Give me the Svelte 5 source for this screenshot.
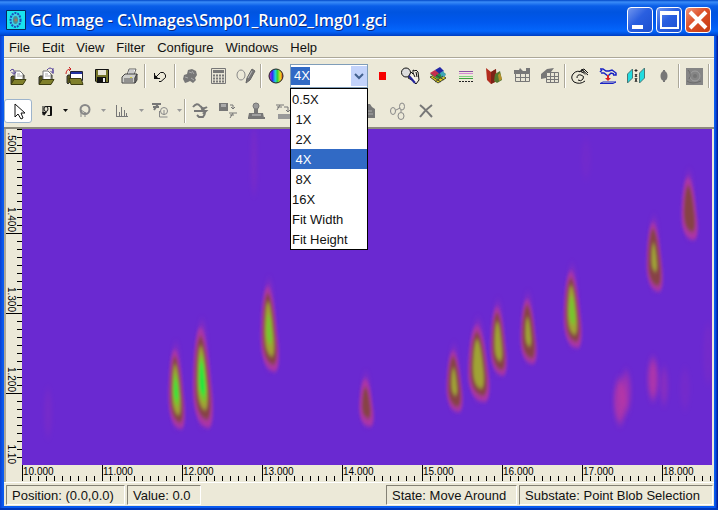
<script>
  const menus = ['File', 'Edit', 'View', 'Filter', 'Configure', 'Windows', 'Help'];

  const folder = `<path d="M3 18V11l1-1h3v5l-3 3zM16 13V9h-2" fill="#55551c" stroke="#333"/><path d="M7 5h5l3 3v6H7z" fill="#fff" stroke="#777"/><path d="M9 8h3M9 10h5" stroke="#aaa"/><path d="M6 13.500h12L15 18.500H3z" fill="#80802b" stroke="#3c3c10"/>`;
  const shape = {
    open: folder + `<path d="M2 5q2-3 4-1v4M3.500 6L6 8.500 8 6" fill="none" stroke="#55429b"/>`,
    reopen: folder + `<path d="M11 4q3-4 6 0v3M14.500 5L17 7.500V2" fill="none" stroke="#55429b"/>`,
    openImage: `<path d="M3 17V10l1-1h3v6l-3 3z" fill="#55551c" stroke="#333"/><path d="M6.500 5.500h12v9h-12z" fill="#fff" stroke="#223"/><path d="M7 6h11v2H7z" fill="#2333a0"/><path d="M5 12.500h12L19 18.500H7z" fill="#80802b" stroke="#3c3c10"/><path d="M2 8q0-5 5-5M5 1l2 2-2 2" fill="none" stroke="#c22"/>`,
    save: `<path d="M3.500 3.500h13v13H5l-1.500-1.500z" fill="#76762a" stroke="#111"/><path d="M6 4h8v5H6z" fill="#e8e5d6"/><path d="M5 11h9v5H5z" fill="#111"/><path d="M11 12h2v4h-2z" fill="#eee"/>`,
    print: `<path d="M7 9l2-6h7l-2 6z" fill="#fff" stroke="#666"/><path d="M9 5h5M9 7h5" stroke="#999"/><path d="M2 11l3-3h12l-2 4v5H2z" fill="#d0d0cc" stroke="#444"/><path d="M15 12l2-4v6l-2 3z" fill="#777" stroke="#444"/><path d="M4 13h9M4 15h9" stroke="#555"/><path d="M10 11h2v1h-2z" fill="#cc4"/>`,
    undo: `<path d="M9 15.500h2l4.500-4V9l-2-2.500h-3L5 12M4.500 7v5.500H10" fill="none" stroke="#111"/><path d="M4 8l5 5H4z" fill="#111"/>`,
    blobs: `<path d="M3 13l1-4 3-1 1-4 4-1 4 2 1 4-2 3 1 2-3 3-3-2-2 1-3 1z" fill="#777"/><path d="M9 6l3 1M12 5l2 3M5 11l3 1M11 12l3 2" stroke="#aaa"/>`,
    calc: `<path d="M3.500 2.500h14v15h-14z" fill="#e8e5d6" stroke="#777"/><path d="M5 4h11v3H5z" fill="#777"/><path d="M5 9.500h11M5 12.500h11M5 15.500h11" stroke="#777" stroke-width="2" stroke-dasharray="2 1"/>`,
    edit: `<ellipse cx="5" cy="9" rx="4" ry="5" fill="none" stroke="#888"/><path d="M10 17l1-5 5-9 3 2-5 9z" fill="#777" stroke="#666"/><path d="M12 12l4-7" stroke="#bbb"/>`,
    stop: `<path d="M7 6h7v8H7z" fill="#f60000"/>`,
    pick: `<circle cx="6" cy="6.500" r="4.500" fill="#dcdcdc" stroke="#111"/><path d="M9 10l2-4 2 2V4l2 1 1-1 2 2 1 8-3 4-4-4-4-2z" fill="#f3eee0" stroke="#111"/><path d="M13 7l2 4M16 6l1 5" stroke="#111"/><path d="M9 10l6 7" stroke="#229" stroke-width="2"/><path d="M12 10l4 5" stroke="#fff"/>`,
    surface: `<path d="M2 11l8 6 8-5-7-5z" fill="#dcd020" stroke="#443"/><path d="M2 8l8 5 8-5-8-5z" fill="#218c47"/><path d="M2 7l5-3 4 3-4 4z" fill="#c52f50"/><path d="M7 4l5-3 4 4-4 3z" fill="#2427a5"/><path d="M12 7l3-2 3 4-4 3z" fill="#3fa6ba"/><path d="M5 11l8 5M8 9l8 5M15 10l-8 6" stroke="#443"/>`,
    lines: `<path d="M3 5h14v1H3z" fill="#8d52a5"/><path d="M3 7h14v1H3z" fill="#d58ad5"/><path d="M3 10h14v1H3z" fill="#7fd07f"/><path d="M3 12h14v1H3z" fill="#3da53d"/><path d="M3 15.500h14" stroke="#222" stroke-dasharray="2 1"/>`,
    solid: `<path d="M2 2l5 4 5-3 1 12-6 3-4-4z" fill="#b32d1e"/><path d="M7 6l5-3-1 13-4 2z" fill="#7c2218"/><path d="M11 8l5-3 2 9-5 3-3-2z" fill="#54772f"/><path d="M14 9l2-2 2 6-3 2z" fill="#b6902b"/>`,
    gridA: `<path d="M2 4h5l1-2 3 3h3V2h4v6H2z" fill="#777"/><path d="M3.500 7.500h14v8h-14zM3 11.500h15M8.500 7v9M13.500 7v9" fill="#e8e5d6" stroke="#777"/>`,
    gridB: `<path d="M1 8l6-5 7-1-3 4h-3v9l-2-3-5 1z" fill="#777"/><path d="M6.500 6.500h12v10h-12zM6 10.500h12M6 13.500h12M10.500 6v10M14.500 6v10" fill="#e8e5d6" stroke="#777"/>`,
    hand: `<path d="M14 7Q7 3 3 8q-3 4 1 8 6 3 11-1M7 12q0-4 4-3 4 1 2 4-2 3-5 1M9 6l3-2 6 5M11 4l3-1 4 4" fill="none" stroke="#111"/><path d="M11 5l5 4M13 4l3 3" stroke="#111" stroke-dasharray="1 1"/>`,
    baseline: `<path d="M2 3h3l3 2h3l3-1 4 3v2h-3M2 6l2-2M3 7h3l4 3 3-3 3 1" fill="none" stroke="#1822c4" stroke-width="1.500"/><path d="M10 9v4" stroke="#d22" stroke-width="2"/><path d="M7 12h6l-3 3z" fill="#d22"/><path d="M2 17.500l3-1.500h13l-3 1.500z" fill="none" stroke="#1822c4"/>`,
    compare: `<path d="M1.500 8l5-5v9l-5 5zM13.500 7l5-5v10l-5 5z" fill="#22dce0" stroke="#4a7775"/><path d="M10 3v3M8.500 4.500h3M9 8l2 3M11 8l-2 3M9 16l2-4M9 12l2 4" stroke="#222"/>`,
    blob: `<ellipse cx="10" cy="10" rx="3.500" ry="5" fill="#777"/><path d="M10 4v12" stroke="#777" stroke-width="2"/>`,
    texture: `<path d="M2 2h17v17H2z" fill="#858585"/><circle cx="11" cy="10" r="5" fill="none" stroke="#a0a0a0"/><circle cx="11" cy="10" r="2" fill="#747474"/><path d="M3 15q5 4 14 0M4 4q4 4 1 9" fill="none" stroke="#6b6b6b"/>`,
    pointer: `<path d="M7 3v13l3-3 3 5 2-1-2-5h4z" fill="#fff" stroke="#111"/>`,
    lasso: `<path d="M8.500 5.500h7v9h-4" fill="none" stroke="#111"/><path d="M14.500 6v8" stroke="#111"/><ellipse cx="10" cy="8" rx="2" ry="2.500" fill="#e8e5d6" stroke="#111"/><path d="M7 5v9" stroke="#111"/><path d="M6 11h5l-3 4z" fill="#111"/>`,
    lassoOff: `<circle cx="11" cy="8.500" r="4.500" fill="none" stroke="#888" stroke-width="2"/><path d="M7 16V9l6 4M11 11v5" fill="none" stroke="#888"/>`,
    chart: `<path d="M4.500 4v12M4 15.500h12M7.500 11v4M9.500 6v9M12.500 9v6M14.500 12v3" fill="none" stroke="#777"/>`,
    template: `<path d="M2 3h9M8 3L4 9M3 6h6" fill="none" stroke="#777" stroke-width="2"/><circle cx="14" cy="10" r="3.500" fill="none" stroke="#888"/><path d="M9.500 10v6h8M14 9v5" fill="none" stroke="#888"/>`,
    drift: `<path d="M3 6q4-5 7-1t7 1M11 5l2 6M4 10h12l-3 3M13 8q4 3 0 8H9l-2-2" fill="none" stroke="#777" stroke-width="2"/>`,
    saveTemplate: `<path d="M1 2h9v8H1z" fill="#777"/><path d="M3 3h5v3H3z" fill="#aaa"/><path d="M12 4h3v4M13 6l2 2 2-2M11 12h8M15 12l-3 5M12 14h4" fill="none" stroke="#777"/>`,
    stamp: `<path d="M3 12h14l1 5H2z" fill="#777"/><circle cx="10" cy="5" r="3" fill="#999" stroke="#777"/><path d="M8 8h4v5H8z" fill="#777"/><path d="M6 14h9" stroke="#ccc"/><path d="M2 17h17" stroke="#777" stroke-width="2"/>`,
    applyTemplate: `<path d="M2 4h8M6 4L3 9M3 6h5M10 6h4v5M12 9l2 2 2-2" fill="none" stroke="#777"/><path d="M4 13h14v5H4z" fill="#999"/>`,
    clip: `<path d="M2 3h8l2 3 3 2v9H4V7H2z" fill="#777"/><path d="M6 10h6M6 13h7" stroke="#aaa"/>`,
    graph: `<ellipse cx="5" cy="10" rx="2.500" ry="3.500" fill="none" stroke="#888"/><ellipse cx="14" cy="5.500" rx="2.500" ry="3.500" fill="none" stroke="#888"/><ellipse cx="13" cy="15" rx="3" ry="3.500" fill="none" stroke="#888"/><path d="M8 9l4-2M13 9v2" stroke="#888"/>`,
    remove: `<path d="M4 4q5 4 12 12M16 4Q9 9 4 16" fill="none" stroke="#777" stroke-width="2"/>`
  };

  const groupsA = [
    [['open', 'Open image'], ['reopen', 'Reopen'], ['openImage', 'Import'], ['save', 'Save'], ['print', 'Print']],
    [['undo', 'Undo']],
    [['blobs', 'Detect blobs'], ['calc', 'Compute'], ['edit', 'Edit blobs']]
  ];
  const views = [['stop', 'Stop'], ['pick', 'Inspect'], ['surface', '3D surface'], ['lines', 'Slices'], ['solid', 'Solid view'], ['gridA', 'Blob table'], ['gridB', 'Peak table']];
  const process = [['hand', 'Draw'], ['baseline', 'Correct baseline'], ['compare', 'Compare'], ['blob', 'Blob overlay']];
  const splits = [['lasso', 'Select blob'], ['lassoOff', 'Select area'], ['chart', 'Chromatogram'], ['template', 'Template']];
  const templates = [['drift', 'Transform'], ['saveTemplate', 'Save template'], ['stamp', 'Stamp'], ['applyTemplate', 'Apply template']];
  const trailing = [['clip', 'Paste'], ['graph', 'Link'], ['remove', 'Delete']];

  const zooms = ['0.5X', ' 1X', ' 2X', ' 4X', ' 8X', '16X', 'Fit Width', 'Fit Height'];
  let zoom = $state(' 4X');

  // Only majors whose label fits in the visible plot are drawn
  let plotWidth = $state(708);
  const range = (n) => Array.from({ length: n }, (_, i) => i);
  const xMajors = $derived(range(Math.max(0, Math.floor((plotWidth - 50) / 80) + 1)).map((i) => ({ at: i * 80, text: `${10 + i}.000` })));
  const yMajors = [
    { at: 24, text: '.500', end: 23 },
    { at: 104, text: '1.400', end: 103 },
    { at: 184, text: '1.300', end: 183 },
    { at: 264, text: '1.200', end: 263 },
    { at: 344, text: '1.10', end: 335 }
  ];

  // Peaks: centre x, top, bottom, half width, strength 0..4
  const peaks = [
    [154, 214, 304, 9, 3.6], [180, 190, 304, 11, 4], [247, 150, 247, 10, 3.3], [344, 246, 300, 8, 1.4],
    [432, 217, 286, 9, 2.2], [456, 190, 277, 12, 3], [476, 172, 250, 9, 2.6], [506, 165, 238, 9, 2.2],
    [550, 136, 223, 10, 3.4], [632, 88, 166, 9, 2.1], [667, 43, 114, 9, 1.6]
  ];
  const smudges = [
    [598, 272, 6, 22, 0.7], [604, 263, 5, 20, 0.5], [631, 250, 5, 20, 0.7], [642, 257, 4, 18, 0.3],
    [232, 32, 3, 34, 0.14], [26, 284, 4, 24, 0.12], [564, 30, 5, 20, 0.07], [686, 225, 5, 30, 0.1], [663, 260, 5, 20, 0.1]
  ];
  const tear = 'M0-1C.5-.95 .8-.3 .95 .25C1.100 .7 .9 1 .5 1C-.2 1-1 .8-.95 .25C-.85-.3-.5-.95 0-1Z';
  const tones = [
    { fill: '#ad35a6', size: 0.88, wide: 0.9, min: 0 },
    { fill: '#874345', size: 0.74, wide: 0.7, min: 1 },
    { fill: '#a0a334', size: 0.56, wide: 0.44, min: 2 },
    { fill: '#73c82d', size: 0.42, wide: 0.34, min: 3 },
    { fill: '#1be83c', size: 0.36, wide: 0.3, min: 3.5 }
  ];
  function layers([x, top, bottom, w, strength]) {
    const mid = (top + bottom) / 2;
    const half = (bottom - top) / 2;
    return tones.filter((t) => strength > t.min).map((t) => {
      const grow = Math.min(1, 0.6 + (strength - t.min) * 0.5);
      return { fill: t.fill, move: `translate(${x} ${mid + half * 0.03}) skewX(2) scale(${w * t.wide * grow} ${half * t.size * grow})` };
    });
  }
</script>

{#snippet tool(item)}
  <button class="tool" aria-label={item[1]}>
    <svg width="20" height="20" viewBox="0 0 20 20">{@html shape[item[0]]}</svg>
  </button>
{/snippet}

<div class="window">
  <header class="title">
    <svg class="app" width="20" height="20" viewBox="0 0 20 20">
      <path d="M.5 .5h19v19H.5z" fill="#19e4ef" stroke="#052a5c" />
      <ellipse cx="9.500" cy="10" rx="5" ry="7" fill="#3ad4e8" stroke="#1c50b8" stroke-width="2" stroke-dasharray="2 1" />
      <ellipse cx="9.500" cy="10" rx="2.500" ry="4" fill="#4a8d95" />
      <circle cx="10" cy="10" r="1.500" fill="#a07860" />
    </svg>
    <h1>GC Image - C:\Images\Smp01_Run02_Img01.gci</h1>
    <div class="controls">
      <button aria-label="Minimize"><svg width="24" height="24" viewBox="0 0 24 24"><path d="M4 17h11v4H4z" fill="#fff" /></svg></button>
      <button aria-label="Maximize"><svg width="24" height="24" viewBox="0 0 24 24"><path d="M3 3h19v18H3zM5 7v12h15V7z" fill="#fff" fill-rule="evenodd" /></svg></button>
      <button class="close" aria-label="Close"><svg width="24" height="24" viewBox="0 0 24 24"><path d="M4 4l16 16M20 4L4 20" stroke="#fff" stroke-width="4" /></svg></button>
    </div>
  </header>

  <div class="body">
    <nav class="menu">
      {#each menus as m}<button>{m}</button>{/each}
    </nav>

    <div class="toolbar">
      {#each groupsA as group}
        {#each group as item}{@render tool(item)}{/each}
        <span class="sep"></span>
      {/each}
      <button class="tool" aria-label="Colour map">
        <svg width="20" height="20" viewBox="0 0 20 20">
          <defs>
            <linearGradient id="hues">
              <stop offset="0" stop-color="#d020d0" /><stop offset=".25" stop-color="#3030f0" />
              <stop offset=".45" stop-color="#20d0e0" /><stop offset=".6" stop-color="#30d040" />
              <stop offset=".8" stop-color="#e0e020" /><stop offset="1" stop-color="#f03020" />
            </linearGradient>
          </defs>
          <circle cx="10" cy="10" r="7" fill="url(#hues)" stroke="#222" />
        </svg>
      </button>
      <div class="combo">
        <select aria-label="Zoom" bind:value={zoom}>
          {#each zooms as z}<option value={z}>{z.trim()}</option>{/each}
        </select>
        <svg class="arrow" width="16" height="20" viewBox="0 0 16 20"><path d="M0 0h16v20H0z" fill="#c3d3fb" /><path d="M4 8l4 4 4-4" fill="none" stroke="#42608e" stroke-width="2" /></svg>
        <ul role="listbox" aria-label="Zoom levels">
          {#each zooms as z}<li role="option" aria-selected={z === zoom} class:current={z === zoom}>{z}</li>{/each}
        </ul>
      </div>
      {#each views as item}{@render tool(item)}{/each}
      <span class="sep"></span>
      {#each process as item}{@render tool(item)}{/each}
      <span class="sep"></span>
      {@render tool(['texture', 'Texture'])}
      <span class="sep"></span>
    </div>

    <div class="toolbar second">
      <button class="tool active" aria-label="Move around" aria-pressed="true">
        <svg width="20" height="20" viewBox="0 0 20 20">{@html shape.pointer}</svg>
      </button>
      {#each splits as item, i}
        {@render tool(item)}
        <button class="drop" class:off={i > 0} aria-label="{item[1]} options">
          <svg width="5" height="3" viewBox="0 0 5 3"><path d="M0 0h5L2.500 3z" fill="currentColor" /></svg>
        </button>
      {/each}
      <span class="sep"></span>
      {#each templates as item}{@render tool(item)}{/each}
      <span class="covered"></span>
      {#each trailing as item}{@render tool(item)}{/each}
    </div>

    <main class="plot" bind:clientWidth={plotWidth}>
      <svg class="yaxis" width="16">
        <defs>
          <pattern id="ticksY" width="16" height="8" patternUnits="userSpaceOnUse"><path d="M11 0h5v1h-5z" /></pattern>
        </defs>
        <rect width="16" height="100%" fill="url(#ticksY)" />
        {#each yMajors as m}
          <path d="M0 {m.at}h16v1H0z" />
          <text transform="translate(2 {m.end}) rotate(90)" text-anchor="end">{m.text}</text>
        {/each}
      </svg>
      <svg class="heat" role="img" aria-label="Chromatogram image">
        <defs>
          <filter id="soft" x="-50%" y="-20%" width="200%" height="140%"><feGaussianBlur stdDeviation="1.500 2" /></filter>
          <filter id="haze" x="-150%" y="-50%" width="400%" height="200%"><feGaussianBlur stdDeviation="2 5" /></filter>
        </defs>
        {#each smudges as [x, y, rx, ry, o]}
          <ellipse cx={x} cy={y} {rx} {ry} fill="#c83a9c" opacity={o} filter="url(#haze)" />
        {/each}
        {#each peaks as p}
          <ellipse cx={p[0]} cy={(p[1] + p[2]) / 2 - 3} rx={p[3] * 0.5} ry={(p[2] - p[1]) * 0.45} fill="#b337a8" opacity=".5" filter="url(#haze)" />
          <g filter="url(#soft)">
            {#each layers(p) as l}<path d={tear} fill={l.fill} transform={l.move} />{/each}
          </g>
        {/each}
      </svg>
      <svg class="xaxis" height="17">
        <defs>
          <pattern id="ticksX" width="8" height="17" patternUnits="userSpaceOnUse"><path d="M0 11h1v5H0z" /></pattern>
        </defs>
        <rect width="100%" height="17" fill="url(#ticksX)" />
        {#each xMajors as m}
          <path d="M{m.at} 0h1v16h-1z" />
          <text x={m.at + 1} y="10">{m.text}</text>
        {/each}
      </svg>
    </main>

    <footer class="status">
      <span class="cell position">Position: (0.0,0.0)</span>
      <span class="cell value">Value: 0.0</span>
      <span class="cell state">State: Move Around</span>
      <span class="cell substate">Substate: Point Blob Selection</span>
    </footer>
  </div>
</div>

<style>
  :global(body) { margin: 0; }
  .window {
    box-sizing: border-box;
    min-height: 100vh;
    display: flex;
    flex-direction: column;
    padding: 0 4px 4px;
    background: linear-gradient(90deg, #0a3fd0, #0a5bf0 3px, #0a5bf0 calc(100% - 3px), #00138c);
    box-shadow: inset 0 -2px #0036b8;
    font: 13px/16px "Liberation Sans", Arial, sans-serif;
    color: #111;
  }
  button { border: 0; padding: 0; background: none; font: inherit; color: inherit; }
  .title {
    display: flex;
    align-items: center;
    height: 36px;
    box-sizing: border-box;
    margin: 0 -4px;
    padding: 4px 7px 0 6px;
    background: linear-gradient(#0148c8, #3a8cf8 2px, #0a5ee8 6px, #0054e0 12px, #0058ee 22px, #0466fc 31px, #0050dc 34px, #003cc0);
  }
  h1 {
    flex: 1;
    margin: 0 0 0 4px;
    font: 600 16px/20px "Open Sans", sans-serif;
    color: #fff;
    text-shadow: 1px 1px #0a2a80;
    white-space: nowrap;
  }
  .controls { display: flex; gap: 3px; }
  .controls button {
    width: 26px;
    height: 26px;
    box-sizing: border-box;
    border: 1px solid #fff;
    border-radius: 4px;
    background: linear-gradient(135deg, #7296ee, #2a5fe0 45%, #1c4fd0);
  }
  .controls .close { background: linear-gradient(135deg, #ef9478, #dc4f28 45%, #c43c14); }
  .controls svg { display: block; }
  .body { flex: 1; display: flex; flex-direction: column; background: #ece9d8; }
  .menu {
    display: flex;
    gap: 12px;
    height: 19px;
    padding: 2px 5px 0;
    border-bottom: 1px solid #aca899;
    box-shadow: 0 1px #fff;
  }
  .toolbar { display: flex; align-items: center; height: 32px; padding-top: 2px; }
  .second { height: 33px; border-bottom: 2px solid #8d8a7e; }
  .tool { flex: none; display: grid; place-items: center; width: 28px; height: 26px; }
  .tool.active { height: 24px; box-sizing: border-box; border: 1px solid #9db4cc; border-radius: 3px; background: #fff; }
  .drop { display: grid; place-items: center; width: 10px; height: 20px; }
  .drop.off { color: #999; }
  .sep { flex: none; width: 1px; height: 24px; margin-right: 1px; background: #aca899; box-shadow: 1px 0 #fff; }
  .covered { flex: none; width: 58px; }
  .combo { position: relative; flex: none; width: 78px; height: 24px; }
  select {
    appearance: none;
    width: 100%;
    height: 24px;
    padding: 0 0 0 3px;
    border: 1px solid #7f9db9;
    border-radius: 0;
    outline: 0;
    background: linear-gradient(#316ac5, #316ac5) 0 2px / 19px 18px no-repeat #fff;
    font: 13px/20px "Liberation Sans", Arial, sans-serif;
    color: #fff;
  }
  option { color: #111; }
  .arrow { position: absolute; top: 2px; right: 1px; pointer-events: none; }
  ul {
    position: absolute;
    z-index: 2;
    top: 24px;
    left: 0;
    right: 0;
    margin: 0;
    padding: 0;
    border: 1px solid #000;
    background: #fff;
    list-style: none;
  }
  li { height: 20px; padding-left: 1px; line-height: 22px; white-space: pre; }
  .current { background: #316ac5; color: #fff; }
  .plot {
    flex: 1;
    display: grid;
    grid-template: 1fr 17px / 16px 1fr;
    margin-right: 2px;
    border-left: 2px solid #aca899;
  }
  .plot svg { display: block; overflow: hidden; }
  .plot text { font: 10px "Liberation Sans", Arial, sans-serif; }
  .yaxis { height: 100%; min-height: 336px; }
  .heat { width: 100%; height: 100%; background: #6a29d1; }
  .xaxis { grid-column: 2; width: 100%; }
  .status {
    display: flex;
    gap: 2px;
    padding: 2px 1px 1px 2px;
    border-top: 1px solid #fff;
  }
  .cell {
    box-sizing: border-box;
    padding: 1px 4px 0 5px;
    border: 1px solid;
    border-color: #848175 #fff #fff #848175;
    line-height: 17px;
    white-space: nowrap;
  }
  .position { width: 119px; }
  .value { width: 74px; }
  .state { width: 131px; margin-left: auto; }
  .substate { width: 194px; }
</style>
